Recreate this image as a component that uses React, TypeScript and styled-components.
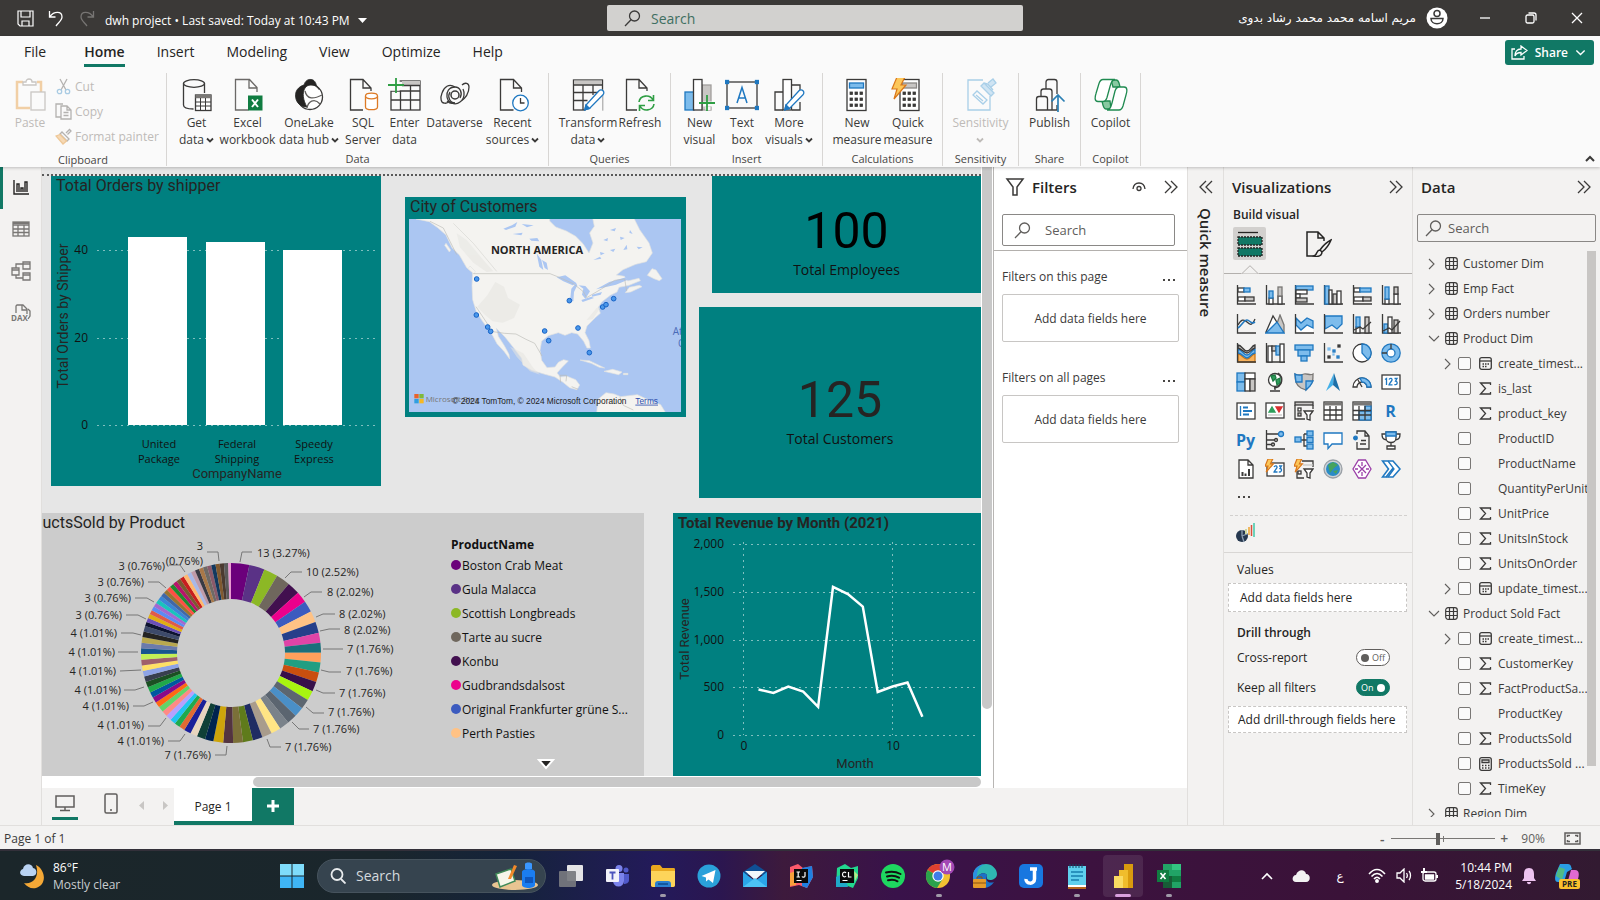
import React from "react";
import styled, { createGlobalStyle, css } from "styled-components";

/* ---------- theme values ---------- */
const UI = `"Segoe UI", "Open Sans", "Noto Sans", "DejaVu Sans", sans-serif`;
const DIN = `"DIN", "Roboto", "Open Sans", sans-serif`;
const K = "#3b3a39";
const INK = "#252423";
const PANE = "#f3f2f1";
const GREEN = "#117865";
const TEAL = "#008080";
const BF = "#7dbcec";
const BS = "#1f78c1";
const GF = "#c8c6c4";

const Global = createGlobalStyle`
  * { box-sizing: border-box; }
  html, body, #root { height: 100%; }
  body { margin: 0; font-family: ${UI}; font-size: 12px; color: ${INK}; overflow: hidden; }
  button, input { font-family: inherit; font-size: inherit; color: inherit; }
  button { border: 0; background: none; padding: 0; margin: 0; cursor: pointer; }
  svg { display: block; flex: none; }
`;

const App_ = styled.div`
  height: 100vh;
  display: grid;
  grid-template-rows: 36px 131px minmax(0, 1fr) 24px 51px;
  background: ${PANE};
`;

/* ---------- title bar ---------- */
const TitleBar = styled.header`
  display: grid;
  grid-template-columns: 607fr 416px 577fr;
  align-items: center;
  background: #3b3937;
  color: #fff;
`;
const TitleLeft = styled.div`
  display: flex;
  align-items: center;
  gap: 9px;
  padding-left: 17px;
`;
const QuickAccess = styled.div`
  display: flex;
  gap: 14px;
`;
const TitleText = styled.div`
  display: flex;
  align-items: center;
  gap: 8px;
  font-size: 12px;
  line-height: 18px;
  padding-top: 5px;
  white-space: nowrap;
`;
const IconButton = styled.button`
  display: flex;
  align-items: center;
  justify-content: center;
  width: 17px;
  height: 20px;
`;
const TitleSearch = styled.label`
  display: flex;
  align-items: center;
  height: 26px;
  gap: 10px;
  padding-left: 17px;
  border-radius: 2px;
  background: #d2d1cf;
  color: #3f6f61;
`;
const PlainInput = styled.input`
  flex: 1;
  min-width: 0;
  border: 0;
  padding: 0;
  outline: 0;
  background: transparent;
  color: inherit;
  &::placeholder { color: inherit; opacity: 1; }
`;
const TitleInput = styled(PlainInput)`font-size: 14px;`;
const TitleRight = styled.div`
  display: flex;
  align-items: center;
  justify-content: flex-end;
  padding-right: 14px;
`;
const UserName = styled.span`
  font-family: "DejaVu Sans", sans-serif;
  font-size: 12px;
  margin-right: 10px;
  white-space: nowrap;
`;
const WindowButton = styled(IconButton)`
  width: 18px;
  margin-left: 28px;
`;

/* ---------- ribbon ---------- */
const Ribbon = styled.div`
  position: relative;
  z-index: 2;
  background: #fafafa;
  box-shadow: 0 1px 3px rgba(0, 0, 0, 0.22);
`;
const TabRow = styled.div`
  display: flex;
  align-items: flex-start;
  justify-content: space-between;
  height: 33px;
  padding: 0 6px 0 7px;
`;
const Tabs = styled.nav`
  display: flex;
  gap: 32px;
  padding-left: 17px;
`;
const Tab = styled.button<{ $active?: boolean; $first?: boolean }>`
  height: 31px;
  padding: 3px 0 0;
  font-size: 14px;
  line-height: 26px;
  margin-right: ${(p) => (p.$first ? 6 : 0)}px;
  font-weight: ${(p) => (p.$active ? 600 : 400)};
  border-bottom: 3px solid ${(p) => (p.$active ? GREEN : "transparent")};
`;
const ShareButton = styled.button`
  display: flex;
  align-items: center;
  gap: 7px;
  height: 25px;
  margin-top: 4px;
  padding: 0 8px 0 6px;
  border-radius: 3px;
  background: ${GREEN};
  color: #fff;
  font-size: 12px;
  font-weight: 600;
`;
const Groups = styled.div`
  display: flex;
  align-items: flex-start;
  height: 98px;
  padding-top: 4px;
`;
const Group = styled.section<{ $w: number }>`
  width: ${(p) => p.$w}px;
  height: 93px;
  padding-top: 5px;
  display: flex;
  flex-direction: column;
  border-right: 1px solid #d8d6d4;
`;
const GroupRow = styled.div`
  flex: 1;
  display: flex;
  justify-content: center;
`;
const ClipRow = styled.div`
  flex: 1;
  display: flex;
  padding-left: 13px;
`;
const GroupName = styled.div`
  font-size: 11px;
  line-height: 14px;
  text-align: center;
  color: #484644;
`;
const BigButton = styled.button<{ $w: number; $off?: boolean }>`
  width: ${(p) => p.$w}px;
  display: flex;
  flex-direction: column;
  align-items: center;
  gap: 2px;
  font-size: 12px;
  line-height: 17px;
  white-space: nowrap;
  color: ${(p) => (p.$off ? "#bebbb8" : K)};
`;
const ButtonLine = styled.span`
  display: flex;
  justify-content: center;
  align-items: center;
  gap: 2px;
  height: 17px;
`;
const ClipList = styled.div`
  display: flex;
  flex-direction: column;
  padding-left: 8px;
`;
const ClipButton = styled.button`
  display: flex;
  align-items: center;
  gap: 3px;
  height: 25px;
  padding-bottom: 9px;
  font-size: 12px;
  color: #bebbb8;
  white-space: nowrap;
`;
const Collapse = styled.button`
  margin-left: auto;
  align-self: flex-end;
  padding: 0 5px 5px 0;
`;

/* ---------- workspace ---------- */
const Body = styled.div`
  display: grid;
  grid-template-columns: 42px minmax(0, 1fr) 36px 189px 188px;
  min-height: 0;
`;
const Rail = styled.nav`
  display: flex;
  flex-direction: column;
  border-right: 1px solid #e1dfdd;
`;
const RailButton = styled.button<{ $active?: boolean }>`
  height: 42px;
  display: flex;
  align-items: center;
  justify-content: center;
  padding: 0 3px 2px 0;
  border-left: 3px solid ${(p) => (p.$active ? GREEN : "transparent")};
`;
const Center = styled.div`
  display: grid;
  grid-template-rows: minmax(0, 1fr) 37px;
  min-height: 0;
`;
const Stage = styled.div`
  display: grid;
  grid-template-columns: minmax(0, 1fr) 12px 194px;
  grid-template-rows: minmax(0, 1fr) 12px;
  background: #fff;
  min-height: 0;
`;
const Canvas = styled.main`
  position: relative;
  overflow: hidden;
  background: #e6e6e6;
`;
const PageEdge = styled.div`
  margin-top: 7px;
  border-top: 2px dotted #5a5a5a;
`;
const VScroll = styled.div`
  padding: 0 1px;
  &::before { content: ""; display: block; height: 89%; border-radius: 0 0 5px 5px; background: #c8c8c8; }
`;
const HScroll = styled.div`
  grid-column: 1;
  grid-row: 2;
  padding: 1px 0;
  &::before { content: ""; display: block; height: 10px; margin-left: 211px; border-radius: 5px; background: #c8c8c8; }
`;
const Visual = styled.article<{ $x: number; $y: number; $w: number; $h: number; $bg?: string }>`
  position: absolute;
  left: ${(p) => p.$x}px;
  top: ${(p) => p.$y}px;
  width: ${(p) => p.$w}px;
  height: ${(p) => p.$h}px;
  background: ${(p) => p.$bg || TEAL};
  overflow: hidden;
`;
const VisualTitle = styled.h2<{ $bold?: boolean; $pad?: number }>`
  margin: 0;
  padding-left: ${(p) => p.$pad ?? 5}px;
  font-family: ${DIN};
  font-size: ${(p) => (p.$bold ? 15 : 16)}px;
  line-height: 20px;
  font-weight: ${(p) => (p.$bold ? 700 : 400)};
  color: ${INK};
  white-space: nowrap;
`;
const Card = styled.div<{ $top: number; $color: string }>`
  padding-top: ${(p) => p.$top}px;
  text-align: center;
  strong {
    display: block;
    font-family: ${DIN};
    font-weight: 400;
    font-size: 50px;
    line-height: 56px;
    color: ${(p) => p.$color};
  }
  span { display: block; font-size: 14px; line-height: 22px; color: #111; }
`;
const MapBox = styled.div`
  margin: 2px 5px 0 4px;
`;
const Legend = styled.div`
  display: flex;
  flex-direction: column;
  width: 190px;
  padding-top: 3px;
  font-size: 12px;
  color: #111;
  b { line-height: 17px; }
`;
const LegendRow = styled.div<{ $c: string }>`
  display: flex;
  align-items: center;
  gap: 1px;
  height: 24px;
  white-space: nowrap;
  &::before { content: ""; width: 10px; height: 10px; border-radius: 50%; background: ${(p) => p.$c}; }
`;
const LegendMore = styled.button`
  align-self: center;
  margin-top: 14px;
`;
const DonutRow = styled.div`
  display: flex;
  align-items: flex-start;
  padding-left: 42px;
`;

/* ---------- panes ---------- */
const Pane = styled.aside`
  display: flex;
  flex-direction: column;
  min-height: 0;
  border-left: 1px solid #e1dfdd;
`;
const FiltersPane = styled(Pane)`
  grid-row: 1 / 3;
  grid-column: 3;
  background: #fff;
  border-left: 1px solid #b8b6b4;
`;
const PaneHead = styled.div`
  display: flex;
  align-items: center;
  height: 41px;
  padding: 0 8px 2px;
`;
const PaneTitle = styled.h2`
  margin: 0;
  flex: 1;
  font-size: 15px;
  line-height: 22px;
  font-weight: 600;
`;
const HeadTools = styled.div`
  display: flex;
  align-items: center;
  gap: 16px;
`;
const SearchBox = styled.label<{ $h: number; $gap: number }>`
  display: flex;
  align-items: center;
  gap: ${(p) => p.$gap}px;
  height: ${(p) => p.$h}px;
  border: 1px solid #8a8886;
  border-radius: 2px;
  font-size: 13px;
  color: #605e5c;
  padding-left: ${(p) => (p.$gap > 10 ? 11 : 7)}px;
`;
const FilterSearch = styled.div`
  padding: 6px 12px 4px 8px;
  border-bottom: 1px solid #b3b0ad;
  margin-bottom: 17px;
`;
const FilterLabel = styled.div`
  display: flex;
  justify-content: space-between;
  align-items: center;
  padding: 0 12px 0 8px;
  font-size: 12px;
  line-height: 18px;
  color: #3b3a39;
`;
const FilterDrop = styled.div`
  margin: 8px 8px 27px;
  height: 48px;
  border: 1px solid #c8c6c4;
  border-radius: 2px;
  display: flex;
  align-items: center;
  justify-content: center;
  font-size: 12px;
  color: #3b3a39;
`;
const Dots = styled.button`
  display: flex;
  gap: 3px;
  padding-top: 6px;
  &::before, &::after, & > i { content: ""; width: 2px; height: 2px; background: #484644; }
`;
const QuickPane = styled(Pane)`
  align-items: center;
`;
const VerticalTitle = styled.h2`
  margin: 0;
  writing-mode: vertical-rl;
  font-size: 15px;
  line-height: 22px;
  font-weight: 600;
`;
const BuildLabel = styled.div`
  padding-left: 9px;
  font-size: 12px;
  line-height: 14px;
  font-weight: 600;
`;
const BuildTabs = styled.div`
  display: flex;
  gap: 36px;
  padding: 5px 0 0 9px;
`;
const BuildTab = styled.button<{ $active?: boolean }>`
  width: 33px;
  height: 33px;
  display: flex;
  align-items: center;
  justify-content: center;
  border-radius: 2px;
  background: ${(p) => (p.$active ? "#d2d0ce" : "transparent")};
`;
const Notch = styled.div`
  height: 14px;
  padding: 5px 0 0 17px;
  border-bottom: 1px solid #b3b0ad;
`;
const VizGrid = styled.div`
  display: grid;
  grid-template-columns: repeat(6, 29px);
  grid-auto-rows: 29px;
  padding: 6px 0 0 7px;
`;
const VizButton = styled.button`
  display: flex;
  align-items: center;
  justify-content: center;
  color: ${BS};
  font-size: 16px;
  font-weight: 700;
  line-height: 20px;
`;
const MoreRow = styled.div`
  height: 33px;
  margin: 0 5px 0 6px;
  padding: 7px 0 0 8px;
  border-bottom: 1px dashed #d2d0ce;
`;
const CustomRow = styled.div`
  height: 37px;
  padding: 7px 0 0 12px;
  border-bottom: 1px solid #d8d6d4;
  margin-bottom: 8px;
`;
const WellLabel = styled.div<{ $strong?: boolean }>`
  padding-left: 13px;
  font-size: 12px;
  line-height: 18px;
  font-weight: ${(p) => (p.$strong ? 600 : 400)};
`;
const Well = styled.div<{ $h: number; $pad: number }>`
  margin: 4px 5px 12px 4px;
  height: ${(p) => p.$h}px;
  padding-left: ${(p) => p.$pad}px;
  display: flex;
  align-items: center;
  border: 1px dashed #c8c6c4;
  background: #fff;
  font-size: 12px;
  white-space: nowrap;
`;
const ToggleRow = styled.label`
  display: flex;
  align-items: center;
  justify-content: space-between;
  height: 29px;
  padding: 0 22px 0 13px;
  margin-top: 1px;
`;
const Switch = styled.span<{ $on?: boolean }>`
  position: relative;
  display: flex;
  align-items: center;
  justify-content: space-between;
  flex-direction: ${(p) => (p.$on ? "row-reverse" : "row")};
  width: 34px;
  height: 17px;
  padding: 0 4px;
  border-radius: 9px;
  border: 1px solid ${(p) => (p.$on ? GREEN : "#605e5c")};
  background: ${(p) => (p.$on ? GREEN : "#fff")};
  color: ${(p) => (p.$on ? "#fff" : "#605e5c")};
  font-size: 9px;
  line-height: 12px;
  &::before { content: ""; width: 8px; height: 8px; border-radius: 50%; background: ${(p) => (p.$on ? "#fff" : "#605e5c")}; }
  input { position: absolute; inset: 0; margin: 0; opacity: 0; width: 100%; height: 100%; }
`;
const DataSearch = styled.div`
  padding: 6px 4px 9px;
`;
const TreeWrap = styled.div`
  display: flex;
  flex: 1;
  min-height: 0;
  margin-bottom: 8px;
  padding-right: 4px;
`;
const Tree = styled.div`
  flex: 1;
  min-width: 0;
  overflow: hidden;
`;
const TreeScroll = styled.div`
  width: 9px;
  &::before { content: ""; display: block; height: 91%; background: #c8c6c4; }
`;
const TreeRow = styled.div<{ $child?: boolean }>`
  display: flex;
  align-items: center;
  height: 25px;
  padding-left: ${(p) => (p.$child ? 31 : 15)}px;
  font-size: 12px;
  color: #3b3a39;
  white-space: nowrap;
  label { display: flex; align-items: center; }
`;
const Slot = styled.span<{ $w: number }>`
  width: ${(p) => p.$w}px;
  flex: none;
  display: flex;
  align-items: center;
`;
const Check = styled.input`
  appearance: none;
  width: 13px;
  height: 13px;
  margin: 0 8px 0 0;
  border: 1px solid #797775;
  border-radius: 2px;
  background: #fafafa;
`;

/* ---------- page bar / status ---------- */
const PageBar = styled.div`
  display: flex;
  background: ${PANE};
`;
const LayoutButton = styled.button<{ $active?: boolean }>`
  width: 26px;
  height: 32px;
  margin-left: 10px;
  display: flex;
  align-items: center;
  justify-content: center;
  border-bottom: 3px solid ${(p) => (p.$active ? GREEN : "transparent")};
`;
const PhoneButton = styled(LayoutButton)`margin: 1px 10px 0 20px;`;
const PageArrows = styled.div`
  display: flex;
  gap: 10px;
  padding-right: 2px;
`;
const PageArrow = styled.button`
  width: 14px;
  padding-bottom: 2px;
  display: flex;
  justify-content: center;
  align-items: center;
`;
const PageTab = styled.button`
  width: 78px;
  background: #fff;
  border-bottom: 4px solid ${GREEN};
  padding-top: 4px;
  font-size: 12px;
`;
const AddPage = styled.button`
  width: 42px;
  display: flex;
  align-items: center;
  justify-content: center;
  padding-bottom: 2px;
  background: ${GREEN};
`;
const Status = styled.footer`
  display: flex;
  align-items: center;
  justify-content: space-between;
  border-top: 1px solid #e1dfdd;
  padding: 2px 19px 0 4px;
  font-size: 12px;
  color: #3b3a39;
`;
const Zoom = styled.div`
  display: flex;
  align-items: center;
  gap: 5px;
  color: #605e5c;
`;
const ZoomButton = styled.button`
  width: 8px;
  font-size: 14px;
  line-height: 16px;
  font-weight: 600;
`;
const Range = styled.input`
  appearance: none;
  width: 104px;
  height: 14px;
  margin: 0;
  background: linear-gradient(#797775, #797775) 0 50% / 100% 1px no-repeat,
    linear-gradient(#797775, #797775) 52px 50% / 1px 6px no-repeat;
  &::-webkit-slider-thumb { appearance: none; width: 4px; height: 12px; background: #605e5c; }
`;
const Percent = styled.span`margin: 0 14px 0 8px;`;

/* ---------- taskbar ---------- */
const Taskbar = styled.footer`
  display: flex;
  align-items: center;
  border-top: 2px solid #33303a;
  color: #fff;
  background: linear-gradient(90deg, #1b262a 0%, #1a262c 24%, #15233b 32%, #231a5a 41%, #2b1650 45%, #3d1a3c 49%, #39124a 56%, #3c123f 68%, #3a1238 84%, #321a31 100%);
`;
const Weather = styled.button`
  display: flex;
  align-items: center;
  gap: 7px;
  width: 268px;
  padding-left: 20px;
  text-align: left;
  font-size: 12px;
  line-height: 17px;
  span { display: block; }
  span + span { color: #c9cdd0; }
`;
const TaskSearch = styled.label`
  display: flex;
  align-items: center;
  width: 229px;
  height: 34px;
  margin: 0 2px 0 1px;
  padding: 0 6px 0 12px;
  border-radius: 17px;
  background: #36444f;
  border: 1px solid #46535d;
  gap: 10px;
  font-size: 14px;
  color: #d5dade;
`;
const TaskItem = styled.button<{ $mark?: "dot" | "bar" }>`
  position: relative;
  width: 46px;
  height: 48px;
  display: flex;
  align-items: center;
  justify-content: center;
  ${(p) => p.$mark === "bar" && css`
    margin: 0 3px;
    width: 40px;
    height: 42px;
    border-radius: 4px;
    background: rgba(255, 255, 255, 0.09);
  `}
  &::after {
    content: "";
    display: ${(p) => (p.$mark ? "block" : "none")};
    position: absolute;
    bottom: ${(p) => (p.$mark === "bar" ? 0 : 3)}px;
    width: ${(p) => (p.$mark === "bar" ? 16 : 6)}px;
    height: 3px;
    border-radius: 2px;
    background: ${(p) => (p.$mark === "bar" ? "#d9a0de" : "#a09aa8")};
  }
`;
const Start = styled(TaskItem)`width: 48px;`;
const Tray = styled.div`
  margin-left: auto;
  display: flex;
  align-items: center;
  padding-right: 12px;
`;
const TrayButton = styled.button<{ $w: number }>`
  width: ${(p) => p.$w}px;
  display: flex;
  align-items: center;
  justify-content: center;
  font-family: "DejaVu Sans", sans-serif;
`;
const Clock = styled.time`
  text-align: right;
  font-size: 12px;
  line-height: 17px;
  width: 66px;
  margin-left: 2px;
  span { display: block; }
`;

/* ---------- small glyphs ---------- */
const Svg = ({ w, h, vb, sw = 1.3, c = K, children }: { w: number; h?: number; vb?: string; sw?: number; c?: string; children: React.ReactNode }) => (
  <svg width={w} height={h ?? w} viewBox={vb ?? `0 0 ${w} ${h ?? w}`} fill="none" stroke={c} strokeWidth={sw} aria-hidden="true">{children}</svg>
);
const Down = ({ c = K, s = 8, sw = 1.8 }) => <Svg w={s} vb="0 0 8 8" c={c} sw={sw}><path d="M1 2.500l3 3 3-3" /></Svg>;
const Mag = ({ c = K, s = 17 }) => <Svg w={s} vb="0 0 17 17" c={c}><circle cx="10.500" cy="6" r="5" /><path d="M7 9.800L1 16" /></Svg>;
const Dbl = ({ left }: { left?: boolean }) => <Svg w={14} c={K} sw={1.3}><path d={left ? "M7 1L1 7l6 6M13 1L7 7l6 6" : "M1 1l6 6-6 6M7 1l6 6-6 6"} /></Svg>;

/* ---------- ribbon icons (34 x 34) ---------- */
const R = ({ children, c }: { children: React.ReactNode; c?: string }) => <Svg w={34} c={c}>{children}</Svg>;
const Bolt = ({ x = 0, y = 0, s = 1 }) => (
  <path transform={`translate(${x} ${y}) scale(${s})`} d="M5 0h8L9 8h5L2 22l3-10H0z" fill="#fcc75a" stroke="#d9771b" strokeWidth={1.2 / s} />
);
const Pencil = ({ x, y }: { x: number; y: number }) => (
  <g transform={`translate(${x} ${y})`}><path d="M15 0.800a2.600 2.600 0 0 1 4 4L5.500 18.500 0.800 19.800 2 15z" fill="#fff" stroke={BS} /><path d="M2 15l3.500 3.500-4.700 1.300z" fill={BS} stroke={BS} /></g>
);
const Plus = ({ x, y }: { x: number; y: number }) => <path d={`M${x} ${y + 8}h16M${x + 8} ${y}v16`} stroke="#2f9e44" strokeWidth="1.800" />;
const CalcBody = ({ x, head = BF }: { x: number; head?: string }) => (
  <g transform={`translate(${x} 0)`}>
    <rect x="1" y="1.500" width="19" height="31" fill="#fff" />
    <rect x="3.500" y="5" width="14" height="5" fill={head} stroke={head === BF ? BS : "#8a8886"} />
    {[14, 20, 26].map((y) => [4, 9, 14].map((cx) => <rect key={`${cx}-${y}`} x={cx} y={y} width="2.500" height="2.500" fill={K} stroke={K} strokeWidth=".8" />))}
  </g>
);
const icons = {
  paste: <Svg w={34} c="#c9c6c3"><path d="M10 4H4v26h13" stroke="#f1cfa5" strokeWidth="2.500" /><path d="M24 4h4v11" stroke="#f1cfa5" strokeWidth="2.500" /><path d="M10 7V4h3c0-4 6-4 6 0h4v3z" fill="#fff" /><rect x="18" y="14" width="14" height="18" fill="#fafafa" /></Svg>,
  cut: <Svg w={17} c="#b4b2b0"><path d="M5 1l6 11M12 1L6 12" /><circle cx="4.500" cy="13.500" r="2.200" stroke="#a9cbe3" /><circle cx="12.500" cy="13.500" r="2.200" stroke="#a9cbe3" /></Svg>,
  copy: <Svg w={17} c="#b4b2b0"><path d="M6 14H1V1h7" /><path d="M6 3h6l4 4v9H6zM12 3v4h4M8.500 9.500h5M8.500 12.500h5" /></Svg>,
  brush: <Svg w={17} c="#b4b2b0"><path d="M11 5l3.500-3.500 1.500 1.500L12.500 6.500" /><path d="M7 4l7 7-2 2-7-7z" /><path d="M5 6.500L1 8l7 8 3.500-3z" fill="#f6d9b5" stroke="#eec797" /></Svg>,
  getData: <R><ellipse cx="14" cy="5.500" rx="10.500" ry="3.800" /><path d="M3.500 5.500V27c0 2.500 4 4 10 4M24.500 5.500V15" /><rect x="15.500" y="17" width="15.500" height="15.500" fill="#fff" /><path d="M15.500 18.500H31" strokeWidth="3.500" stroke="#7a7876" /><path d="M15.500 24H31M15.500 28H31M20.500 20v13M25.500 20v13" strokeWidth="1" /></R>,
  excel: <R><path d="M26 14V9.500L18.500 1.500H4.500v30.500h13M18 1.500v8.500h8" stroke="#6b6967" /><rect x="17" y="17.500" width="14.500" height="15" fill="#107c41" stroke="none" /><path d="M21 21.500l6 7.500M27 21.500l-6 7.500" stroke="#fff" strokeWidth="2" /></R>,
  lake: <R><circle cx="18" cy="19" r="12.500" fill="#fff" /><path d="M12 7c1-4 4-6 7-5.500 3 0 5 3 5.500 6.500-4-2-9-1.500-11.500 2-3 5-2 12 2 19C6 29 2 21 4 14c1-3 4-6 8-7z" fill={INK} stroke={INK} strokeWidth=".8" /><path d="M13 13c2 9 9 8 17 4M15 30c1-6 7-11 13-4" stroke="#605e5c" /><path d="M24.500 8l3 3.500" /></R>,
  sql: <R><path d="M25 13V10l-8-8.500H4.500V32H17M17 1.500V10h8" /><path d="M19.500 18v11c0 3.600 12 3.600 12 0V18" fill="#fff" stroke="#dd7a26" /><ellipse cx="25.500" cy="18" rx="6" ry="2.800" fill="#fff" stroke="#dd7a26" /></R>,
  enter: <R><rect x="3" y="3" width="29" height="29" /><path d="M14 5h18" strokeWidth="4" stroke={GF} /><path d="M3 13h29M3 22h29M12.500 13v19M22.500 7v25M14 7.500h18" /><path d="M0 0h11v12H0z" fill="#fafafa" stroke="#fafafa" /><Plus x={0} y={-1} /></R>,
  dataverse: <R><circle cx="17" cy="17" r="4" strokeWidth="1.500" /><path d="M22 20c3-5 0-11-5-11-6 0-9 5-8 10 1 6 8 9 13 5 6-4 9-10 9-15 0-4-4-5-7-2" /><path d="M12 14c-3 5 0 11 5 11M17 9c-6-4-11 0-13 6-2 5-1 10 2 10 3 1 5-2 5-2M25 11c2 4 1 9-1 11" /><path d="M17 25c-3 1-6 0-8-2" /></R>,
  recent: <R><path d="M25.500 14V10l-8-8.500H4.500V32h13M17.500 1.500V10h8" /><circle cx="24.500" cy="25" r="7.800" fill="#fff" stroke={BS} /><path d="M24.500 20v5h4" /></R>,
  transform: <R><rect x="2.500" y="2" width="29" height="30" /><path d="M3 4.500h28" strokeWidth="4" stroke={GF} /><path d="M2.500 7h29M2.500 14.500h29M2.500 22.500h14M12 7v25M22 7v10" /><path d="M31 13v20H15z" fill="#fafafa" stroke="#fafafa" /><Pencil x={13} y={12} /></R>,
  refresh: <R><path d="M24 13V10l-8-8.500H3.500V32H14M16 1.500V10h8" /><path d="M16 24c1-7 11-8 14-2M30.500 17v5.500H25M31 26c-1 7-11 8-14 2M16.500 33v-5.500H22" stroke="#2f9e44" strokeWidth="1.600" /></R>,
  newVisual: <R><rect x="2" y="14" width="9" height="18" fill={BF} stroke={BS} /><rect x="19" y="7" width="9" height="25" fill={GF} stroke="#a19f9d" /><rect x="10.500" y="1.500" width="8.500" height="30.500" fill="#fff" /><path d="M20 26h13M25 32v-3" stroke="#fafafa" strokeWidth="5" /><Plus x={16} y={17} /></R>,
  textBox: <R><rect x="2" y="4" width="30" height="26" /><path d="M12 25l5-15.500L22 25M13.700 20h6.600" stroke={BS} strokeWidth="1.500" />{[[2, 4], [32, 4], [2, 30], [32, 30]].map(([x, y]) => <rect key={`${x}${y}`} x={x - 1.5} y={y - 1.5} width="3" height="3" fill={BS} stroke={BS} />)}</R>,
  moreVisuals: <R><path d="M11 14H3v18h8M19.500 7H28v8M28 24v8h-8" /><rect x="11" y="1.500" width="8.500" height="30.500" fill="#fff" /><Pencil x={12} y={12} /></R>,
  newMeasure: <R><CalcBody x={6} /></R>,
  quickMeasure: <R><CalcBody x={8} head={GF} /><Bolt x={1} y={-1} /></R>,
  sensitivity: <R c="#a9cfe8"><path d="M19 2H4v30h22V18" /><path d="M9 17l4-4 10 9-4 4zM12 17l7 6" /><path d="M17 8l3-3 10 10-3 3zM24 5l5-4 3 4-5 4M20 5l4 1 5 6" fill="#cfe4f3" /></R>,
  publish: <R><path d="M13 11V4c0-1.500 1-2.500 2.500-2.500h6C23 1.500 24 2.500 24 4v12M24 27v5H3.500V21c0-1.500 1-2.500 2.500-2.500h6c1.500 0 2.500 1 2.500 2.500v11M8 18v-4.500C8 12 9 11 10.500 11h6c1.500 0 2.500 1 2.500 2.500V32" /><path d="M25 34V17M18.500 23.500L25 17l6.500 6.500" stroke="#2b7fb3" strokeWidth="1.700" /></R>,
  copilot: <R c="#1f8a50"><path d="M17 2h5c3 0 3 3 4 7h-7z" fill="#88c9a1" /><path d="M17 31h-5c-3 0-3-4-4-8h8z" fill="#88c9a1" /><path d="M9 1.500h12c-3 0-4 3-5 7l-3 11c-1 3-2 4-4 4H4c-4 0-3-5-2-8l3-10c1-3 2-4 4-4z" fill="#fff" /><path d="M25 32H13c3 0 4-3 5-7l3-12c1-3 2-4 4-4h5c4 0 3 5 2 8l-3 11c-1 3-2 4-4 4z" fill="#fff" /></R>,
};

type Big = [keyof typeof icons, string, string, number, boolean?];
const ribbon: { name: string; w: number; items: Big[] }[] = [
  { name: "Data", w: 382, items: [["getData", "Get", "data", 46, true], ["excel", "Excel", "workbook", 56], ["lake", "OneLake", "data hub", 67, true], ["sql", "SQL", "Server", 41], ["enter", "Enter", "data", 42], ["dataverse", "Dataverse", "", 58], ["recent", "Recent", "sources", 58, true]] },
  { name: "Queries", w: 122, items: [["transform", "Transform", "data", 61, true], ["refresh", "Refresh", "", 43]] },
  { name: "Insert", w: 152, items: [["newVisual", "New", "visual", 41], ["textBox", "Text", "box", 44], ["moreVisuals", "More", "visuals", 50, true]] },
  { name: "Calculations", w: 120, items: [["newMeasure", "New", "measure", 51], ["quickMeasure", "Quick", "measure", 51]] },
  { name: "Sensitivity", w: 76, items: [["sensitivity", "Sensitivity", "", 60, true]] },
  { name: "Share", w: 62, items: [["publish", "Publish", "", 50]] },
  { name: "Copilot", w: 60, items: [["copilot", "Copilot", "", 50]] },
];

/* ---------- visualization gallery icons (20 x 20) ---------- */
const V = ({ children }: { children: React.ReactNode }) => <Svg w={20} sw={1.3}>{children}</Svg>;
const Ax = () => <path d="M1.500 0v19H20" />;
const rc = (x: number, y: number, w: number, h: number, f = "#fff", s = K) => <rect x={x} y={y} width={w} height={h} fill={f} stroke={s} />;
const viz: [string, React.ReactNode][] = [
  ["Stacked bar chart", <V><Ax />{rc(2, 3, 6, 4)}{rc(8, 3, 6, 4, BF, BS)}{rc(2, 12, 7, 4)}{rc(9, 12, 9, 4, GF)}</V>],
  ["Stacked column chart", <V><Ax />{rc(4, 13, 4, 6)}{rc(4, 6, 4, 7, BF, BS)}{rc(13, 11, 4, 8)}{rc(13, 2, 4, 9, GF, "#797775")}</V>],
  ["Clustered bar chart", <V><Ax />{rc(2, 1, 17, 4, BF, BS)}{rc(2, 5, 11, 4)}{rc(2, 9, 4, 4)}{rc(2, 13, 11, 4, GF)}</V>],
  ["Clustered column chart", <V><Ax />{rc(2, 1, 4, 18, BF, BS)}{rc(6, 5, 3, 14)}{rc(10, 9, 4, 10, GF)}{rc(14, 6, 4, 13)}</V>],
  ["100% stacked bar chart", <V><Ax />{rc(2, 3, 6, 4)}{rc(8, 3, 11, 4, BF, BS)}{rc(2, 12, 9, 4)}{rc(11, 12, 8, 4, GF)}</V>],
  ["100% stacked column chart", <V><Ax />{rc(4, 14, 4, 5)}{rc(4, 2, 4, 12, BF, BS)}{rc(13, 9, 4, 10)}{rc(13, 2, 4, 7, GF)}</V>],
  ["Line chart", <V><Ax /><path d="M2 11c3-6 6-6 9-3s5 4 8-3" /><path d="M2 14c4-3 6-8 9-8s4 5 8 2" stroke={BS} strokeWidth="1.600" /></V>],
  ["Area chart", <V><path d="M1 18L8 2l10 16z" fill="#fff" /><path d="M9 18l6-17 4 10v7z" fill={GF} stroke="#797775" /><path d="M1 19l11-11 7 11z" fill={BF} stroke={BS} /></V>],
  ["Stacked area chart", <V><path d="M2 4l5 5 6-5 6 3v12H2z" fill="#fff" stroke="none" /><path d="M2 4l5 5 6-5 6 3v7l-6-3-6 5-5-5z" fill={BF} stroke={BS} /><Ax /></V>],
  ["100% stacked area chart", <V><path d="M2 2h17v8l-5 5-5-4-7 4z" fill={BF} stroke={BS} /><Ax /></V>],
  ["Line and stacked column chart", <V><Ax />{rc(4, 13, 4, 6)}{rc(4, 3, 4, 10, BF, BS)}{rc(13, 3, 4, 16, GF)}<path d="M2 16l6-3 3 2 8-7" /></V>],
  ["Line and clustered column chart", <V><Ax />{rc(3, 10, 4, 9, BF, BS)}{rc(7, 3, 4, 16)}{rc(13, 6, 4, 13, GF)}<path d="M2 17l6-3 3 2 8-9" /></V>],
  ["Ribbon chart", <V><path d="M2 11c4 0 5 5 9 5s4-5 8-5v8H2z" fill="#f8b25c" stroke="#c77619" /><path d="M2 6c4 0 5 6 9 6s4-5 8-6v4c-4 0-5 5-8 5s-5-5-9-5z" fill={BF} stroke={BS} /><path d="M2 2c4 0 5 6 9 6s4-5 8-6v3c-4 1-5 5-8 5S6 6 2 5z" fill={GF} /><Ax /></V>],
  ["Waterfall chart", <V><Ax />{rc(3, 3, 4, 16)}{rc(7, 3, 4, 5, GF)}{rc(11, 3, 4, 9, BF, BS)}{rc(15, 1, 4, 18)}</V>],
  ["Funnel", <V>{rc(1, 2, 18, 5, BF, BS)}{rc(4, 7, 12, 6, BF, BS)}{rc(7, 13, 6, 5, BF, BS)}</V>],
  ["Scatter chart", <V><Ax />{rc(5, 5, 2, 2, BF, BF)}{rc(10, 7, 2, 2, BF, BS)}{rc(15, 2, 2, 2, K)}{rc(5, 13, 2, 2, K)}{rc(14, 13, 2, 2, BF, BS)}{rc(10, 11, 1, 1, BF, BF)}</V>],
  ["Pie chart", <V><circle cx="10" cy="10" r="9" fill="#fff" /><path d="M10 10V1a9 9 0 0 1 6 15.700z" fill={BF} stroke={BS} /></V>],
  ["Donut chart", <V><circle cx="10" cy="10" r="6.500" stroke={BF} strokeWidth="5" /><circle cx="10" cy="10" r="9.200" stroke={BS} /><circle cx="10" cy="10" r="4" fill="#fff" stroke={BS} /><path d="M10 1v5M1 10h5" stroke={K} /></V>],
  ["Treemap", <V>{rc(1, 1, 8, 9, BF, BS)}{rc(1, 10, 8, 9, BF, BS)}{rc(9, 1, 10, 6)}{rc(9, 7, 5, 12)}{rc(14, 7, 5, 12, GF)}</V>],
  ["Map", <V><circle cx="10" cy="8" r="6.500" fill="#fff" /><path d="M6 4l4-1 1 3-3 3zM11 8l4-2v5l-3 2z" fill="#2e9e5b" stroke="#1d7a43" /><path d="M13 1c6 4 5 14-4 15M10 15v3M5 19h10" /></V>],
  ["Filled map", <V><path d="M1 2c4 2 6 1 9 0s6 2 9 0c0 6 0 9-3 11l-4 5-5-2c-5-3-6-7-6-14z" fill={GF} stroke="#797775" /><path d="M1 2c3 2 5 1 7 1v7H2zM12 9h7l-3 5-4 4z" fill={BF} stroke={BS} /></V>],
  ["Azure map", <V><path d="M11 1L3 19l7-6z" fill="#44b0e8" stroke="none" /><path d="M11 1l6 18-7-6z" fill="#1c6fa8" stroke="none" /></V>],
  ["Gauge", <V><path d="M1 15a9 9 0 0 1 18 0h-4a5 5 0 0 0-10 0z" fill="#fff" /><path d="M8 6.200A9 9 0 0 1 19 15h-4a5 5 0 0 0-5-5z" fill={BF} stroke={BS} /><path d="M10 15L6 8" /></V>],
  ["Card", <V>{rc(1, 3, 18, 14)}<path d="M4 7.500l1.500-1V13M8 7.500c1-2 3.500-1 3 .5-.3 1-3 4-3 4.800h3.500M13.500 6.500H16l-1.500 2.700c3 .3 1.500 4.500-1.200 3.300" stroke={BS} /></V>],
  ["Multi-row card", <V>{rc(1, 2, 18, 16)}<path d="M4.500 5v10" stroke={BS} /><path d="M7 6.500h5M7 10h9M7 13.500h6" stroke={BS} strokeWidth="1.800" /></V>],
  ["KPI", <V>{rc(1, 2, 18, 15)}<path d="M4 11l3-5 3 5z" fill="#2e9e5b" stroke="#2e9e5b" /><path d="M11 6h6l-3 5z" fill="#d92f2f" stroke="#d92f2f" /><path d="M3 14h14" stroke={GF} /></V>],
  ["Slicer", <V>{rc(1, 1, 18, 3, GF)}<path d="M1 4v14h10M19 4v4" />{rc(4, 7, 3, 3)}{rc(4, 12, 3, 3, GF)}<path d="M10 10h9l-3 4v5l-3-1v-4z" fill="#fff" /></V>],
  ["Table", <V>{rc(1, 1, 18, 18)}<path d="M1 3h18" stroke="#797775" strokeWidth="3" /><path d="M1 9h18M1 14h18M7 5v14M13 5v14" /></V>],
  ["Matrix", <V>{rc(1, 1, 18, 18)}{rc(7, 10, 12, 9, BF, BS)}{rc(13, 5, 6, 5, BF, BS)}<path d="M1 3h18" stroke="#797775" strokeWidth="3" /><path d="M1 9.500h18M1 14h18M7 5v14M13 5v14" /></V>],
  ["R script visual", "R"],
  ["Python visual", "Py"],
  ["Key influencers", <V><path d="M1.500 0v19H20M2 4h14M2 10h8M2 14.500h6" /><circle cx="16" cy="4" r="2.500" fill={BF} stroke={BS} /><circle cx="11" cy="10" r="1.500" fill={GF} /><circle cx="8" cy="14.500" r="1.500" fill={GF} /></V>],
  ["Decomposition tree", <V><path d="M6 10h7M10 4v12h3M10 4h3" />{rc(1, 7, 6, 5, BF, BS)}{rc(13, 1, 6, 5, BF, BS)}{rc(13, 7.5, 6, 5, BF, BS)}{rc(13, 14, 6, 5, BF, BS)}</V>],
  ["Q&A", <V><path d="M1 3h18v11H9l-4 4.500V14H1z" fill="#fff" stroke={BS} /></V>],
  ["Narrative", <V><path d="M5 12v7h12V6l-4-5H5v3M13 1v5h4M8 14h6M9 10.500h5" /><circle cx="3.500" cy="8" r="1.800" fill={BS} stroke={BS} /></V>],
  ["Goals", <V><path d="M5 2h10v6c0 6-10 6-10 0zM5 4H1c0 4 1 5 4 6M15 4h4c0 4-1 5-4 6M10 13v3M6 19h8v-3H6z" fill="#fff" /><path d="M5 2h10v4H5z" fill={BF} stroke={BS} /></V>],
  ["Paginated report", <V><path d="M3 1h9l5 5v13H3zM12 1v5h5" fill="#fff" /><path d="M6.500 17v-4M9.500 17v-2.500M13 17V10" strokeWidth="2" /></V>],
  ["New card", <V>{rc(2, 4, 17, 13)}<path d="M9 8c1-2 3.500-1 3 .5-.3 1-3 4-3 4.500h3.500M14 7h2.500L15 9.500c3 .3 1 4.500-1.200 3.300" stroke={BS} /><Bolt x={0} y={0} s={0.6} /></V>],
  ["New slicer", <V><path d="M8 2h11v6M3 12v7h7" />{rc(4, 12, 3, 3)}<path d="M9 6h10" stroke={GF} /><path d="M10 10h9l-3 4v5l-3-1v-4z" fill="#fff" /><Bolt x={0} y={0} s={0.6} /></V>],
  ["ArcGIS map", <V><circle cx="10" cy="10" r="9" fill="#cfd3d6" stroke="#9aa0a6" /><circle cx="10" cy="10" r="7" fill="#2a8bc7" stroke="none" /><path d="M5 6l5-3 5 3-4 3-4 5zM10 12l5-1-2 4z" fill="#46a35e" stroke="none" /></V>],
  ["Power Apps", <V><path d="M6.500 1h7L19 10l-5.500 9h-7L1 10z" stroke="#9b3fa8" fill="#fff" /><path d="M6 6l8 8M14 6l-8 8M10 3v4M10 13v4M3 10h3M14 10h3" stroke="#9b3fa8" /></V>],
  ["Power Automate", <V><path d="M1.500 2H12l7 8-7 8H1.500l6-8z" stroke={BS} fill="#fff" strokeWidth="1.600" /><path d="M7 2l6 8-6 8M12 9L5 18" stroke={BS} /></V>],
];

/* ---------- report charts ---------- */
const dotted = { strokeDasharray: "2 4", stroke: "#7fbfbf", strokeWidth: 1 };
const BarChart = () => (
  <svg width="330" height="290" viewBox="51 196 330 290" fontFamily={UI} fontSize="12" fill="#111">
    {[[40, 250], [20, 338], [0, 425]].map(([v, y]) => (
      <g key={v}><text x="88" y={y + 4} textAnchor="end">{v}</text><path d={`M97 ${y + 0.5}H375`} {...dotted} /></g>
    ))}
    {[[128, 237, "United", "Package"], [206, 242, "Federal", "Shipping"], [283, 250, "Speedy", "Express"]].map(([x, y, a, b]) => (
      <g key={a as string} fontSize="11">
        <rect x={x as number} y={y as number} width="59" height={425 - (y as number)} fill="#fff" />
        <text x={(x as number) + 31} y="448" textAnchor="middle">{a}</text>
        <text x={(x as number) + 31} y="463" textAnchor="middle">{b}</text>
      </g>
    ))}
    <text x="237" y="478" textAnchor="middle" fontFamily={DIN} fontSize="13" fill={INK}>CompanyName</text>
    <text transform="translate(68 316) rotate(-90)" textAnchor="middle" fontFamily={DIN} fontSize="14" fill={INK}>Total Orders by Shipper</text>
  </svg>
);

const revenue: [number, number][] = [[1, 477], [2, 440], [3, 508], [4, 455], [5, 295], [6, 1550], [7, 1475], [8, 1345], [9, 450], [10, 508], [11, 550], [12, 190]];
const LineChart = () => (
  <svg width="308" height="243" viewBox="673 533 308 243" fontFamily={UI} fontSize="12" fill="#111">
    {[[2000, 544], [1500, 592], [1000, 640], [500, 687], [0, 735]].map(([v, y]) => (
      <g key={v}><text x="724" y={y + 4} textAnchor="end">{v.toLocaleString("en-US")}</text><path d={`M733 ${y + 0.5}H977`} {...dotted} /></g>
    ))}
    <path d="M743.500 542V735M892.500 542V735" {...dotted} />
    <text x="744" y="750" textAnchor="middle">0</text>
    <text x="893" y="750" textAnchor="middle">10</text>
    <polyline fill="none" stroke="#fff" strokeWidth="2.500" points={revenue.map(([m, v]) => `${743.6 + 14.9 * m},${735 - v * 0.0955}`).join(" ")} />
    <text x="855" y="768" textAnchor="middle" fontFamily={DIN} fontSize="13" fill={INK}>Month</text>
    <text transform="translate(689 639) rotate(-90)" textAnchor="middle" fontFamily={DIN} fontSize="13" fill={INK}>Total Revenue</text>
  </svg>
);

const slices: [number, string][] = [
  [13, "#6b007b"], [11, "#5a3286"], [10, "#8cb825"], [10, "#6f675d"], [9, "#42104f"], [8, "#ec008c"], [8, "#3c5bbf"], [8, "#ffc285"], [8, "#263f8a"],
  ...["#e044a7", "#1b6f7b", "#ffa05c", "#219e82", "#c94f0f", "#37104a", "#a8f510", "#5c6670", "#4a8fc7", "#5b6570", "#7a828a", "#ffe585", "#a99c8c", "#1f2c63", "#5f7b1b", "#7b7038", "#533440"].map((c): [number, string] => [7, c]),
  [7, "#cda40b"], [6, "#00234f"], [6, "#0f4037"], [5, "#e8d5bf"], [5, "#1a1f99"],
  ...["#e06a33", "#1faa4d", "#22c4f0", "#b5a0ff", "#ff8a85", "#62d568", "#ff6a13", "#8a0a8a", "#0057a0", "#1fa84a", "#1b5023", "#383f4f", "#8da3e6", "#ffe066", "#a0606b", "#c2f056", "#17568e", "#6b7bab", "#b9a84f", "#252423", "#3d4a6a"].map((c): [number, string] => [4, c]),
  ...["#0c1330", "#6a4fb8", "#e0ad13", "#e05a4a", "#5b8bf5", "#a268d0", "#18c4bd", "#3a86d8", "#4068a8", "#9b7430", "#ff4f43", "#218a2e", "#b8146a", "#7a5a30", "#c81e1e", "#ffb870", "#a8b8e8", "#c09aa8", "#3a3a44", "#a97848", "#6e6a66", "#8a5a6a", "#12395f", "#80592f", "#4b3a30", "#5a5a5a"].map((c): [number, string] => [3, c]),
  [2, "#e89ad0"],
];
type Callout = [string, number, number, string];
const right: Callout[] = [
  ["13 (3.27%)", 257, 553, "240,562 242,552 252,552"], ["10 (2.52%)", 306, 572, "285,578 291,572 302,572"],
  ["8 (2.02%)", 327, 592, "304,597 311,592 322,592"], ["8 (2.02%)", 339, 614, "316,617 323,614 335,614"],
  ["8 (2.02%)", 344, 630, "320,631 329,629 340,629"], ["7 (1.76%)", 347, 649, "323,649 343,649"],
  ["7 (1.76%)", 346, 671, "321,670 329,672 341,672"], ["7 (1.76%)", 339, 693, "316,690 323,693 335,693"],
  ["7 (1.76%)", 328, 712, "306,707 313,713 324,713"], ["7 (1.76%)", 313, 729, "292,722 299,729 309,729"],
  ["7 (1.76%)", 285, 747, "267,739 270,747 281,747"],
];
const left: Callout[] = [
  ["7 (1.76%)", 211, 755, "227,746 226,755 215,755"], ["4 (1.01%)", 164, 741, "185,734 180,741 168,741"],
  ["4 (1.01%)", 144, 725, "166,718 160,726 148,726"], ["4 (1.01%)", 129, 706, "153,702 144,706 133,706"],
  ["4 (1.01%)", 121, 690, "144,687 135,690 124,690"], ["4 (1.01%)", 116, 671, "141,670 120,671"],
  ["4 (1.01%)", 115, 652, "138,652 118,652"], ["4 (1.01%)", 117, 633, "141,635 133,633 121,633"],
  ["3 (0.76%)", 122, 615, "146,619 138,615 126,615"], ["3 (0.76%)", 131, 598, "154,602 147,598 135,598"],
  ["3 (0.76%)", 144, 582, "166,588 159,582 148,582"], ["3 (0.76%)", 165, 566, "185,572 180,565 169,565"],
  ["(0.76%)", 203, 561, ""], ["3", 203, 546, "219,561 218,552 207,552"],
];
const Donut = () => {
  const total = slices.reduce((s, [v]) => s + v, 0);
  let at = 0;
  const pt = (r: number, f: number) => `${231 + r * Math.sin(f * 2 * Math.PI)} ${653 - r * Math.cos(f * 2 * Math.PI)}`;
  return (
    <svg width="409" height="243" viewBox="42 533 409 243" fontFamily={UI} fontSize="11" fill={INK}>
      {slices.map(([v, c], i) => {
        const a = at / total;
        at += v;
        const b = at / total;
        return <path key={i} fill={c} d={`M${pt(90, a)}A90 90 0 0 1 ${pt(90, b)}L${pt(54, b)}A54 54 0 0 0 ${pt(54, a)}Z`} />;
      })}
      {right.map(([t, x, y, l]) => <g key={l}><text x={x} y={y + 4}>{t}</text><polyline points={l} fill="none" stroke="#777" /></g>)}
      {left.map(([t, x, y, l]) => <g key={l + t}><text x={x} y={y + 4} textAnchor="end">{t}</text><polyline points={l} fill="none" stroke="#777" /></g>)}
    </svg>
  );
};

const cities = [[260, 357], [259, 465], [293, 501], [302, 514], [464, 513], [476, 542], [538, 422], [564, 504], [598, 578], [638, 441], [648, 434], [671, 416]];
const CityMap = () => (
  <svg width="272" height="193" viewBox="57 177 819 579" preserveAspectRatio="xMinYMin slice">
    <rect x="57" y="177" width="830" height="600" fill="#abc6f2" />
    <g fill="#f4f3f0" stroke="#e2e2e0" strokeWidth="2">
      <path d="M78 177l40 8 25 18 25 22 18 38 22 22 22 38 18 14-2 40 2 42 11 36 18 28 16 22 14 20 14 26 22 24 16 22-2-14-14-26-18-28-6-24 26 26 24 30 26 34 4 20 26 16 40 12 30 8 24 16 20 16 22 6 8-14-12-16-26-10-20 2-10-12 14-16 20-20-14-4-16 8-10 14-24 2-16-22-5-30 5-28 20-16 30-9 20 8 20-8 18 4 18 22 10 20h10l-4-22-12-24 6-20 26-26 14-12-6-18 10-16 26-20 20-10 6-14 30-6 34-14-4-7-34 8-10-14-24-4 20-16 38-16 32-8 18-26-10-30-28-40-16-32-14-22h-84l-28 14 6 30-14 20 10 30-12 30-18-28-22-22-28-16-32-12-18-18v-28z" />
      <path d="M772 346l14-20 12 4 18 26-8 6-16-6zM570 600l28 2 46 22-16-2-24-12zM642 634l26-6 28 8-10 8zM700 640h14v4h-14zM706 398l16-2 34-16-8-4-30 6z" />
      <path d="M620 760l4-42 24-20 24 4 20 8 50-6 34 16 36 14 16 26z" />
      <path d="M240 318l16 16-4 8-18-16zM168 250l14 20-4 6-14-20z" />
    </g>
    <g fill="#e6e5e1" opacity=".55">
      <path d="M262 440l30-34 24-40 26 14 12 34 36 20-18 40-34 14-30-4-26-22zM200 220l30 20 50 60 30 34-20 2-40-28-40-46z" />
      <path d="M360 560l40 20 30 44 20 20-30-10-40-44zM590 480l30-36 12-2-24 36z" />
    </g>
    <g fill="#abc6f2">
      <path d="M500 352l26-6 34 24-12 6-28-12zM540 424l4-38 14-16 4 6-10 20-2 28zM566 376l20 2 14 16-14 22-10-12 4-18zM574 420l30-10 8 4-34 12zM606 404l30-8-4 8-26 6z" />
      <path d="M340 206l26-10 16-10-6 14-28 10zM368 222l30-4-4 8zM395 192l36 4-20 6zM418 236l24-2 6 10-24-2zM440 280l14 20 6 30-12-10zM456 300l14 8 4 22-10-6z" />
      <path d="M640 240l14-6-2 10zM660 210l18-6-4 10zM690 230l14 4-12 6zM660 270l16-4-6 10zM700 270l10-16 2 14zM630 276l14 4-12 6zM740 260l18 2-12 6zM720 210l8 12-10-4zM610 300l20-10 4 6z" />
      <path d="M708 352l-50 14-40 22 60-14 34-14z" />
    </g>
    <g fill="none" stroke="#bdbcb8" strokeWidth="2">
      <path d="M120 184l40 20 20 40 20 40M250 341h230l30 12 40 18 30 24 10 18 44-26 40-26 30-4 6 36" />
      <path d="M302 514l42 6 34 2 30 16 26 12 22 38M512 668l-2-22h20l-2 18M545 680l20 8M690 712l10 24 30 14M258 440l40 60" />
      <path d="M190 190l60 60 70 84" opacity=".5" />
    </g>
    <g fill="#4a97ea" stroke="#1763c6" strokeWidth="3">
      {cities.map(([x, y]) => <circle key={`${x}${y}`} cx={x} cy={y} r="7" />)}
    </g>
    <text x="441" y="283" textAnchor="middle" fontFamily={UI} fontSize="33" fontWeight="700" fill={INK}>NORTH AMERICA</text>
    <text x="848" y="524" fontFamily={UI} fontSize="30" fill="#4a6bb8">Atlantic</text>
    <text x="864" y="560" fontFamily={UI} fontSize="30" fill="#4a6bb8">Ocean</text>
    <rect x="73" y="702" width="13" height="13" fill="#e8622c" /><rect x="88" y="702" width="13" height="13" fill="#80b93a" />
    <rect x="73" y="717" width="13" height="13" fill="#2f9fe0" /><rect x="88" y="717" width="13" height="13" fill="#f8b820" />
    <text x="107" y="725" fontFamily={UI} fontSize="24" fill="#777">Microsoft Bing</text>
    <text x="187" y="731" fontFamily="Liberation Sans, sans-serif" fontSize="25" fill="#222">© 2024 TomTom, © 2024 Microsoft Corporation</text>
    <a href="#terms"><text x="736" y="731" fontFamily="Liberation Sans, sans-serif" fontSize="25" fill="#2d4fae" textDecoration="underline">Terms</text></a>
  </svg>
);

const legend: [string, string][] = [
  ["Boston Crab Meat", "#6b007b"], ["Gula Malacca", "#5a3286"], ["Scottish Longbreads", "#8cb825"], ["Tarte au sucre", "#6f675d"],
  ["Konbu", "#42104f"], ["Gudbrandsdalsost", "#ec008c"], ["Original Frankfurter grüne S...", "#3c5bbf"], ["Perth Pasties", "#ffc285"],
];

/* ---------- data tree ---------- */
type Node = { t: string; k: "table" | "open" | "date" | "sum" | "none" | "calc" };
const tree: Node[] = [
  { t: "Customer Dim", k: "table" }, { t: "Emp Fact", k: "table" }, { t: "Orders number", k: "table" }, { t: "Product Dim", k: "open" },
  { t: "create_timest...", k: "date" }, { t: "is_last", k: "sum" }, { t: "product_key", k: "sum" }, { t: "ProductID", k: "none" },
  { t: "ProductName", k: "none" }, { t: "QuantityPerUnit", k: "none" }, { t: "UnitPrice", k: "sum" }, { t: "UnitsInStock", k: "sum" },
  { t: "UnitsOnOrder", k: "sum" }, { t: "update_timest...", k: "date" }, { t: "Product Sold Fact", k: "open" }, { t: "create_timest...", k: "date" },
  { t: "CustomerKey", k: "sum" }, { t: "FactProductSa...", k: "sum" }, { t: "ProductKey", k: "none" }, { t: "ProductsSold", k: "sum" },
  { t: "ProductsSold ...", k: "calc" }, { t: "TimeKey", k: "sum" }, { t: "Region Dim", k: "table" },
];
const TableGlyph = () => <Svg w={13} sw={1.2}><rect x=".7" y=".7" width="11.600" height="11.600" rx="2.500" /><path d="M4.500 1v11M8.500 1v11M1 4.500h11M1 8.500h11" /></Svg>;
const kindGlyph = {
  date: <Svg w={13}><rect x=".7" y=".7" width="11.600" height="11.600" rx="2" /><path d="M1 4h11" /><path d="M3.500 7h1.500M6 7h1.500M8.500 7H10M3.500 9.500h1.500M6 9.500h1.500" /></Svg>,
  sum: <Svg w={13}><path d="M11.500 3V1H1.500l5 5.500-5 5.500h10v-2" /></Svg>,
  calc: <Svg w={13} h={14}><rect x=".7" y=".7" width="11.600" height="12.600" rx="2" /><path d="M3 3h7v2.500H3zM3 8.500h1.500M6 8.500h1.500M9 8.500h1.500M3 11h1.500M6 11h1.500M9 11h1.500" /></Svg>,
  none: null,
};
const Right = () => <Svg w={7} h={12} c="#605e5c" sw={1.1}><path d="M1 1l5 5-5 5" /></Svg>;
const Open = () => <Svg w={12} h={7} c="#605e5c" sw={1.1}><path d="M1 1l5 5 5-5" /></Svg>;

/* ---------- taskbar icons ---------- */
const T = ({ children }: { children: React.ReactNode }) => <svg width="26" height="26" viewBox="0 0 26 26" aria-hidden="true">{children}</svg>;
const tasks: [string, React.ReactNode, ("dot" | "bar")?][] = [
  ["Task view", <T><rect x="9" y="2" width="16" height="16" rx="1" fill="#e4e4e6" /><rect x="1" y="8" width="17" height="16" rx="1" fill="#77797f" opacity=".92" /></T>],
  ["Teams", <T><circle cx="15" cy="5.500" r="3.500" fill="#7b83eb" /><circle cx="22" cy="7" r="2.500" fill="#5059c9" /><path d="M9 10h11v8a5.500 5.500 0 0 1-11 0z" fill="#7b83eb" /><path d="M20 11h5v6c0 3-3 4-5 4z" fill="#5059c9" /><rect x="2" y="6" width="13" height="13" rx="1" fill="#f2f2fa" /><path d="M5.500 9.500h6M8.500 9.500v7" stroke="#4b53bc" strokeWidth="1.800" /></T>],
  ["File Explorer", <T><path d="M1 4c0-1 1-2 2-2h7l2.500 3H24c1 0 1 1 1 2v15c0 1-1 2-2 2H3c-1 0-2-1-2-2z" fill="#e9a81f" /><path d="M1 8h24v14c0 1-1 2-2 2H3c-1 0-2-1-2-2z" fill="#fdd45a" /><path d="M5 24v-3c0-2 1-3 3-3h10c2 0 3 1 3 3v3z" fill="#2a7fd0" /><path d="M8 20h10v2H8z" fill="#14579c" /></T>, "dot"],
  ["Telegram", <T><circle cx="13" cy="13" r="11.500" fill="#2aa1da" /><path d="M5.500 13l14-6-2.500 13-4.500-3.500-2.500 2v-4z" fill="#fff" /></T>],
  ["Mail", <T><path d="M1 9L13 1l12 8v3H1z" fill="#0f4f94" /><path d="M1 9l12 9L25 9v15H1z" fill="#2aa5e8" /><path d="M3 8h20l-10 9z" fill="#f2f8fc" /><path d="M1 24l12-9 12 9z" fill="#4cc3f5" /></T>],
  ["IntelliJ IDEA", <T><path d="M2 4l8-3 5 4 9-2 1 11-6 11-8-3-9 2z" fill="#fc5a6b" /><path d="M14 5l10-2 1 11-6 11-5-2z" fill="#1f7fe0" /><path d="M2 10l6-2v14l-6 1z" fill="#f9a03c" /><rect x="6" y="6" width="14" height="14" fill="#0a0a0a" /><path d="M8.500 9h3.500M10.200 9v5M8.500 14h3.500M17 9v4c0 1.500-2.500 1.500-3 .5M8.500 17.500h5" stroke="#fff" strokeWidth="1.200" fill="none" /></T>],
  ["CLion", <T><path d="M3 5l8-4 6 4 7-2v12l-5 10-8-3-9 2z" fill="#22d88f" /><path d="M2 14l8-4 4 14-12 0z" fill="#1fa9c9" /><path d="M20 8l4 4-3 6z" fill="#b8e986" /><rect x="6" y="6" width="14" height="14" fill="#0a0a0a" /><path d="M12 10c-1-1.500-3.500-1-3.500 1.500s2.500 3 3.500 1.500M14.500 9v5h3M8.500 17.500h5" stroke="#fff" strokeWidth="1.200" fill="none" /></T>],
  ["Spotify", <T><circle cx="13" cy="13" r="12" fill="#1ed760" /><path d="M6 9.500c5-1.500 10-1 14.500 1.500M7 13.500c4-1.200 8.500-.8 12 1.200M8 17.300c3.500-1 7-.6 9.500 1" stroke="#111" strokeWidth="2" fill="none" strokeLinecap="round" /></T>],
  ["Chrome", <svg width="34" height="34" viewBox="-3 0 34 34" aria-hidden="true"><circle cx="13" cy="17" r="12" fill="#f1c232" /><path d="M13 17L2.600 11A12 12 0 0 1 23.500 11z" fill="#e0402f" /><path d="M13 17l-10.500-6A12 12 0 0 0 12 29l5-8z" fill="#2ba24c" /><circle cx="13" cy="17" r="5.700" fill="#fff" /><circle cx="13" cy="17" r="4.500" fill="#3f7de8" /><circle cx="22" cy="8" r="7.500" fill="#a349b5" /><text x="22" y="12" textAnchor="middle" fontFamily={UI} fontSize="11" fill="#fff">M</text></svg>, "dot"],
  ["Edge", <T><path d="M1 13C1 5 8 1 14 1s11 5 11 10c0 4-4 6-7 6-4 0-3-3-3-4 0-4-8-4-10 2l1 7c-3-1-5-5-5-9z" fill="#2fb7b3" /><path d="M5 15c2-6 10-6 10-2-2 4 1 8 7 6-3 5-9 7-13 5-3-2-5-5-4-9z" fill="#1c71c8" /><path d="M1 13C1 5 8 1 14 1c-7 1-9 7-9 12l1 8c-3-1-5-5-5-8z" fill="#2b8fe0" /><rect x="1" y="16" width="13" height="9" rx="1" fill="#e69a2a" /><path d="M5 16v-2h5v2M1 20h13" stroke="#8a5210" fill="none" /></T>],
  ["Joplin", <T><rect x="1" y="1" width="24" height="24" rx="5" fill="#1877e0" /><path d="M12 6h7M16.500 6v10c0 6-9 5-8.500 0" stroke="#fff" strokeWidth="3.500" fill="none" /></T>],
  ["Notepad", <T><rect x="4" y="3" width="18" height="20" fill="#5fd0ee" /><path d="M4 22h18v3H4z" fill="#fff" /><path d="M4 25h18" stroke="#b5651d" strokeWidth="2" /><path d="M7 9h12M7 13h12M7 17h8" stroke="#177fae" strokeWidth="1.600" /><path d="M6 1v4M9 1v4M12 1v4M15 1v4M18 1v4" stroke="#104a66" /></T>, "dot"],
  ["Power BI", <T><path d="M14 1h9v24h-9z" fill="#d99b0e" /><path d="M9 7h9v18H9z" fill="#f0bd2c" /><path d="M4 13h9v12H4z" fill="#fadb62" /></T>, "bar"],
  ["Excel", <T><path d="M7 1h18v24H7z" fill="#21a366" /><path d="M16 1h9v6h-9z" fill="#33c481" /><path d="M7 13h9v12H7z" fill="#185c37" /><path d="M16 13h9v6h-9z" fill="#107c41" /><rect x="1" y="7" width="12" height="12" fill="#107c41" /><path d="M4.500 10l5 6M9.500 10l-5 6" stroke="#fff" strokeWidth="1.600" /></T>, "dot"],
];

export default function App() {
  return (
    <App_>
      <Global />
      <TitleBar>
        <TitleLeft>
          <QuickAccess>
            <IconButton aria-label="Save"><Svg w={17} c="#fff" sw={1.2}><path d="M1 1h15v15H3l-2-2zM4 1v6h9V1M5 16v-5h7v5" /></Svg></IconButton>
            <IconButton aria-label="Undo"><Svg w={17} c="#fff" sw={1.3}><path d="M1.500 1v6h6M2 6.500C6 1 14 1 14 7c0 3-3 5-6 9" /></Svg></IconButton>
            <IconButton aria-label="Redo"><Svg w={17} c="#777573" sw={1.3}><path d="M14.500 1v6h-6M14 6.500C10 1 2 1 2 7c0 3 3 5 6 9" /></Svg></IconButton>
          </QuickAccess>
          <TitleText>dwh project • Last saved: Today at 10:43 PM<Svg w={9} h={6} c="none"><path d="M0 0h9L4.500 5z" fill="#fff" /></Svg></TitleText>
        </TitleLeft>
        <TitleSearch><Mag /><TitleInput placeholder="Search" aria-label="Search" /></TitleSearch>
        <TitleRight>
          <UserName dir="rtl" lang="ar">مريم اسامه محمد محمد رشاد بدوى</UserName>
          <Svg w={22} c={K} sw={1.5}><circle cx="11" cy="11" r="10.500" fill="#fff" stroke="none" /><circle cx="11" cy="6.500" r="3" /><path d="M5 11.500h12c0 7-12 7-12 0z" /></Svg>
          <WindowButton aria-label="Minimize"><Svg w={12} c="#fff"><path d="M1 6h10" /></Svg></WindowButton>
          <WindowButton aria-label="Restore"><Svg w={12} c="#fff"><rect x="1" y="3" width="8" height="8" rx="1.500" /><path d="M3.500 1H9a2 2 0 0 1 2 2v5.500" /></Svg></WindowButton>
          <WindowButton aria-label="Close"><Svg w={12} c="#fff"><path d="M1 1l10 10M11 1L1 11" /></Svg></WindowButton>
        </TitleRight>
      </TitleBar>

      <Ribbon>
        <TabRow>
          <Tabs>
            {["File", "Home", "Insert", "Modeling", "View", "Optimize", "Help"].map((t) => <Tab key={t} $first={t === "File"} $active={t === "Home"}>{t}</Tab>)}
          </Tabs>
          <ShareButton><Svg w={17} h={15} c="#fff"><path d="M4 4H1v10h12v-3M10 1l6 4.500L10 10V7.500C7 7.500 5 8.500 4 11c0-4 2-7 6-7z" /></Svg>Share<Down c="#fff" s={11} sw={1} /></ShareButton>
        </TabRow>
        <Groups>
          <Group $w={167}>
            <ClipRow>
              <BigButton $w={34} $off disabled>{icons.paste}<ButtonLine>Paste</ButtonLine></BigButton>
              <ClipList>
                <ClipButton disabled>{icons.cut}Cut</ClipButton>
                <ClipButton disabled>{icons.copy}Copy</ClipButton>
                <ClipButton disabled>{icons.brush}Format painter</ClipButton>
              </ClipList>
            </ClipRow>
            <GroupName>Clipboard</GroupName>
          </Group>
          {ribbon.map((g) => (
            <Group key={g.name} $w={g.w}>
              <GroupRow>
                {g.items.map(([ic, a, b, w, more]) => (
                  <BigButton key={ic} $w={w} $off={ic === "sensitivity"}>
                    {icons[ic]}
                    <span>
                      <ButtonLine>{a}</ButtonLine>
                      <ButtonLine>{b}{more && <Down c={ic === "sensitivity" ? "#bebbb8" : K} />}</ButtonLine>
                    </span>
                  </BigButton>
                ))}
              </GroupRow>
              <GroupName>{g.name}</GroupName>
            </Group>
          ))}
          <Collapse aria-label="Collapse ribbon"><Svg w={10} h={7} sw={2}><path d="M1 6l4-4 4 4" /></Svg></Collapse>
        </Groups>
      </Ribbon>

      <Body>
        <Rail>
          <RailButton $active aria-label="Report view"><Svg w={16} h={16} sw={1.4} c={INK}><path d="M1 1v14h15M4 13V5h2v8M8 13V9h2v4M12 13V3h2v10" /></Svg></RailButton>
          <RailButton aria-label="Table view"><Svg w={18} h={16} c="#797775"><rect x="1" y="1" width="16" height="14" /><path d="M1 4h16M1 8h16M1 11.500h16M6 4v11M12 4v11" /><path d="M1 2h16" strokeWidth="2" /></Svg></RailButton>
          <RailButton aria-label="Model view"><Svg w={20} h={20} c="#797775"><path d="M1 7h7v7H1zM1 9h7M12 1h7v7h-7zM12 3h7M12 12h7v7h-7zM12 14h7M5 7V3h7M5 14v3h7" /></Svg></RailButton>
          <RailButton aria-label="DAX query view"><Svg w={20} h={19} c="#797775"><path d="M5 9V2l1-1h6l4 4v5M11 1v5h5" /><text x="0" y="17" fontFamily={UI} fontSize="8" fontWeight="700" fill="#797775" stroke="none">DAX</text><path d="M17 5l2 2v5l-2 3" /></Svg></RailButton>
        </Rail>

        <Center>
          <Stage>
            <Canvas>
              <PageEdge />
              <Visual $x={9} $y={9} $w={330} $h={310}>
                <VisualTitle>Total Orders by shipper</VisualTitle>
                <BarChart />
              </Visual>
              <Visual $x={363} $y={30} $w={281} $h={220}>
                <VisualTitle>City of Customers</VisualTitle>
                <MapBox><CityMap /></MapBox>
              </Visual>
              <Visual $x={670} $y={9} $w={269} $h={117}>
                <Card $top={27} $color="#000"><strong>100</strong><span>Total Employees</span></Card>
              </Visual>
              <Visual $x={657} $y={140} $w={282} $h={191}>
                <Card $top={65} $color={INK}><strong>125</strong><span>Total Customers</span></Card>
              </Visual>
              <Visual $x={-42} $y={346} $w={644} $h={263} $bg="#cccccc">
                <VisualTitle $pad={9}>ProductsSold by Product</VisualTitle>
                <DonutRow>
                  <Donut />
                  <Legend>
                    <b>ProductName</b>
                    {legend.map(([t, c]) => <LegendRow key={t} $c={c}>{t}</LegendRow>)}
                    <LegendMore aria-label="More legend items"><Svg w={18} h={11} c="#fff" sw={2}><path d="M2 1h14L9 9z" fill={INK} /></Svg></LegendMore>
                  </Legend>
                </DonutRow>
              </Visual>
              <Visual $x={631} $y={346} $w={308} $h={263}>
                <VisualTitle $bold>Total Revenue by Month (2021)</VisualTitle>
                <LineChart />
              </Visual>
            </Canvas>
            <VScroll />
            <HScroll />
            <FiltersPane>
              <PaneHead>
                <Svg w={30} h={18} sw={1.5}><path d="M5 1h16l-6 8v8h-4V9z" /></Svg>
                <PaneTitle>Filters</PaneTitle>
                <HeadTools>
                  <Svg w={14} h={10}><path d="M1 7C2-1 12-1 13 7" /><circle cx="7" cy="6.500" r="2" /></Svg>
                  <IconButton aria-label="Collapse filters"><Dbl /></IconButton>
                </HeadTools>
              </PaneHead>
              <FilterSearch><SearchBox $h={32} $gap={14}><Mag c="#605e5c" /><PlainInput placeholder="Search" aria-label="Search filters" /></SearchBox></FilterSearch>
              <FilterLabel>Filters on this page<Dots aria-label="More options"><i /></Dots></FilterLabel>
              <FilterDrop>Add data fields here</FilterDrop>
              <FilterLabel>Filters on all pages<Dots aria-label="More options"><i /></Dots></FilterLabel>
              <FilterDrop>Add data fields here</FilterDrop>
            </FiltersPane>
          </Stage>
          <PageBar>
            <LayoutButton $active aria-label="Desktop layout"><Svg w={22} h={18} c="#605e5c" sw={1.5}><path d="M2 2h18v11H2zM11 13v3M6 16.500h10" /></Svg></LayoutButton>
            <PhoneButton aria-label="Mobile layout"><Svg w={14} h={21} c="#605e5c" sw={1.5}><rect x="1" y="1" width="12" height="19" rx="1.500" /><path d="M6 17h2" /></Svg></PhoneButton>
            <PageArrows>
              <PageArrow aria-label="Previous page"><Svg w={5} h={9} c="none"><path d="M5 0v9L0 4.500z" fill="#c8c6c4" /></Svg></PageArrow>
              <PageArrow aria-label="Next page"><Svg w={5} h={9} c="none"><path d="M0 0v9l5-4.500z" fill="#c8c6c4" /></Svg></PageArrow>
            </PageArrows>
            <PageTab>Page 1</PageTab>
            <AddPage aria-label="New page"><Svg w={12} c="#fff" sw={3}><path d="M6 0v12M0 6h12" /></Svg></AddPage>
          </PageBar>
        </Center>

        <QuickPane>
          <PaneHead><IconButton aria-label="Expand quick measure"><Dbl left /></IconButton></PaneHead>
          <VerticalTitle>Quick measure</VerticalTitle>
        </QuickPane>

        <Pane>
          <PaneHead><PaneTitle>Visualizations</PaneTitle><IconButton aria-label="Collapse visualizations"><Dbl /></IconButton></PaneHead>
          <BuildLabel>Build visual</BuildLabel>
          <BuildTabs>
            <BuildTab $active aria-label="Build visual"><Svg w={26} c={INK}><path d="M1 1.500h20" /><path d="M1 6h24v8H1zM1 17h24v8H1z" fill={GREEN} strokeDasharray="2 1" /></Svg></BuildTab>
            <BuildTab aria-label="Format visual"><Svg w={26} c={INK} sw={1.5}><path d="M8 25H1V1h11l6 6v3M12 1v6h6" /><path d="M25 9c-6 3-9 7-11 10l2 2c4-3 7-7 9-12zM14 19c-4 0-2 4-6 6 4 1 8 0 8-4" fill={PANE} /></Svg></BuildTab>
          </BuildTabs>
          <Notch><Svg w={18} h={9} c="#b3b0ad" sw={1}><path d="M0 8.500L9 0l9 8.500z" fill={PANE} stroke="none" /><path d="M1 8.500L9 .7l8 7.800" /></Svg></Notch>
          <VizGrid>{viz.map(([name, ic]) => <VizButton key={name} aria-label={name}>{ic}</VizButton>)}</VizGrid>
          <MoreRow><Dots aria-label="Get more visuals"><i /></Dots></MoreRow>
          <CustomRow><Svg w={19} h={20} c="none"><circle cx="6" cy="13" r="6" fill="#26384f" /><path d="M6 13V7M6 13l5-2M6 13l2 6" stroke="#8fa0b3" /><path d="M10 6v5" stroke="#cfd8a0" strokeWidth="2" /><path d="M13 4v8" stroke="#f0b860" strokeWidth="2" /><path d="M15.500 2v11" stroke="#d94f3a" strokeWidth="1.500" /><path d="M18 0v14" stroke="#3fc9a8" strokeWidth="1.500" /></Svg></CustomRow>
          <WellLabel>Values</WellLabel>
          <Well $h={29} $pad={11}>Add data fields here</Well>
          <WellLabel $strong>Drill through</WellLabel>
          <ToggleRow>Cross-report<Switch><input type="checkbox" role="switch" />Off</Switch></ToggleRow>
          <ToggleRow>Keep all filters<Switch $on><input type="checkbox" role="switch" defaultChecked />On</Switch></ToggleRow>
          <Well $h={27} $pad={9}>Add drill-through fields here</Well>
        </Pane>

        <Pane>
          <PaneHead><PaneTitle>Data</PaneTitle><IconButton aria-label="Collapse data"><Dbl /></IconButton></PaneHead>
          <DataSearch><SearchBox $h={28} $gap={6}><Mag c="#605e5c" /><PlainInput placeholder="Search" aria-label="Search data" /></SearchBox></DataSearch>
          <TreeWrap>
            <Tree>
              {tree.map(({ t, k }, i) =>
                k === "table" || k === "open" ? (
                  <TreeRow key={i}><Slot $w={17}>{k === "open" ? <Open /> : <Right />}</Slot><Slot $w={18}><TableGlyph /></Slot>{t}</TreeRow>
                ) : (
                  <TreeRow key={i} $child>
                    <Slot $w={14}>{k === "date" && <Right />}</Slot>
                    <label><Check type="checkbox" /><Slot $w={19}>{kindGlyph[k]}</Slot>{t}</label>
                  </TreeRow>
                )
              )}
            </Tree>
            <TreeScroll />
          </TreeWrap>
        </Pane>
      </Body>

      <Status>
        <span>Page 1 of 1</span>
        <Zoom>
          <ZoomButton aria-label="Zoom out">-</ZoomButton>
          <Range type="range" min={10} max={190} defaultValue={90} aria-label="Zoom" />
          <ZoomButton aria-label="Zoom in">+</ZoomButton>
          <Percent>90%</Percent>
          <Svg w={17} h={13} c="#605e5c" sw={1.5}><rect x="1" y="1" width="15" height="11" /><path d="M3.500 5V3.500H6M11 3.500h2.500V5M13.500 8v1.500H11M6 9.500H3.500V8" /></Svg>
        </Zoom>
      </Status>

      <Taskbar>
        <Weather>
          <svg width="26" height="28" viewBox="0 0 26 28" aria-hidden="true"><path d="M16 3c10 5 11 20 0 23-5 1-9-1-12-5 9 2 16-6 12-18z" fill="#f5a836" /><path d="M4 14c-5 0-5-6-1-7 1-6 9-6 10-1 5 1 4 8 0 8z" fill="#b9d2f2" /></svg>
          <div><span>86°F</span><span>Mostly clear</span></div>
        </Weather>
        <Start aria-label="Start"><T><path d="M1 1h11.500v11.500H1zM13.500 1H25v11.500H13.500z" fill="#7fdcfb" /><path d="M1 13.500h11.500V25H1zM13.500 13.500H25V25H13.500z" fill="#3fb5f5" /></T></Start>
        <TaskSearch>
          <Svg w={16} c="#e8ebed" sw={1.8}><circle cx="7" cy="6.500" r="5.500" /><path d="M11 11l4.500 4.500" /></Svg>
          <PlainInput placeholder="Search" aria-label="Search Windows" />
          <svg width="48" height="28" viewBox="0 0 48 28" aria-hidden="true"><ellipse cx="24" cy="23" rx="23" ry="5" fill="#e8c492" /><path d="M5 12l15-5 4 12-15 6z" fill="#f6f6ea" stroke="#3f8a58" strokeWidth="1.500" /><path d="M17 17l6-14 3 1-6 13z" fill="#f08a2a" /><path d="M31 10c0-4 13-4 13 0v13c0 4-13 4-13 0z" fill="#1b7df0" /><path d="M34 2c0-2 7-2 7 0v5h-7z" fill="#3a97ff" /><path d="M34 15h8v6h-8z" fill="#0f56bd" /></svg>
        </TaskSearch>
        {tasks.map(([name, ic, mark]) => <TaskItem key={name} aria-label={name} $mark={mark}>{ic}</TaskItem>)}
        <Tray>
          <TrayButton $w={34} aria-label="Show hidden icons"><Svg w={12} h={8} c="#fff" sw={1.6}><path d="M1 7l5-5 5 5" /></Svg></TrayButton>
          <TrayButton $w={34} aria-label="OneDrive"><Svg w={18} h={14} c="none"><path d="M4 13c-5 0-4-7 0-7 2-6 9-6 10-1 5 0 5 8 0 8z" fill="#f2f2f2" /></Svg></TrayButton>
          <TrayButton $w={44} lang="ar">ع</TrayButton>
          <TrayButton $w={30} aria-label="Network"><Svg w={18} h={15} c="#fff" sw={1.5}><path d="M1 6c5-6 11-6 16 0M3.500 8.500c3.500-4 7.500-4 11 0M6 11c2-2.500 4-2.500 6 0" /><circle cx="9" cy="13" r="1.200" fill="#fff" /></Svg></TrayButton>
          <TrayButton $w={24} aria-label="Volume"><Svg w={17} h={15} c="#fff"><path d="M1 5h3l4-4v13l-4-4H1zM10.500 5c1 1.500 1 3.500 0 5M13 3c2 2.500 2 6.500 0 9" /></Svg></TrayButton>
          <TrayButton $w={28} aria-label="Battery"><Svg w={18} h={15} c="#fff"><rect x="2" y="4" width="13" height="9" rx="2" /><path d="M16 7v3" strokeWidth="2" /><path d="M4.500 7h8v4h-8z" fill="#fff" /><path d="M3 0v5M0 4h6" strokeWidth="2" /></Svg></TrayButton>
          <Clock><span>10:44 PM</span><span>5/18/2024</span></Clock>
          <TrayButton $w={34} aria-label="Notifications"><Svg w={14} h={18} c="none"><path d="M7 1c-4 0-5 3-5 6v4l-2 3h14l-2-3V7c0-3-1-6-5-6zM5 15h4c0 3-4 3-4 0z" fill="#eec3f0" /></Svg></TrayButton>
          <TrayButton $w={42} aria-label="Copilot"><svg width="26" height="28" viewBox="0 0 26 28" aria-hidden="true"><path d="M6 2h8c3 0 3 3 4 5l-5 3-3 10H4c-4 0-3-5-2-9z" fill="#2a9fe6" /><path d="M2 14l3-9 6 2-3 11z" fill="#62c85a" opacity=".7" /><path d="M13 22l4-14h4c5 0 4 6 3 9-1 4-3 6-6 6z" fill="#e06ad0" /><rect x="5" y="17" width="21" height="10" rx="2" fill="#fbc02d" /><text x="15.500" y="25" textAnchor="middle" fontFamily={UI} fontSize="8" fontWeight="700" fill="#222">PRE</text></svg></TrayButton>
        </Tray>
      </Taskbar>
    </App_>
  );
}
